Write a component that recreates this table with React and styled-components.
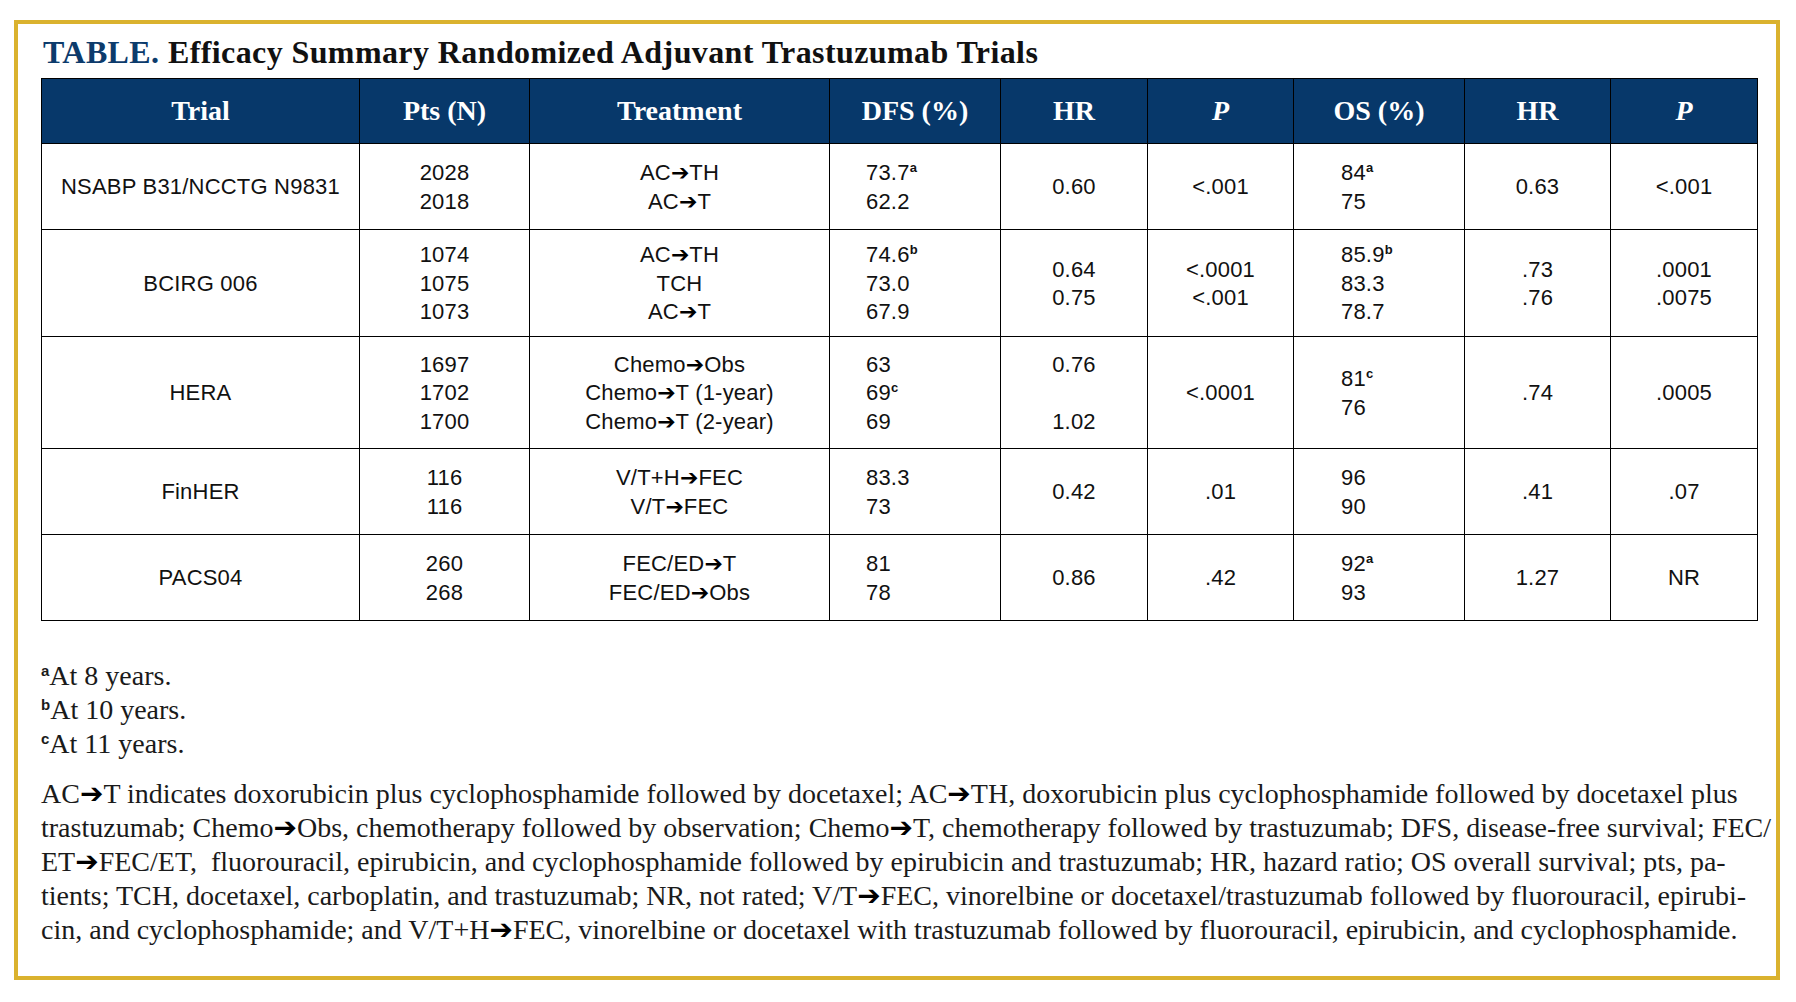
import React from 'react'
import styled, { createGlobalStyle } from 'styled-components'

const GlobalStyle = createGlobalStyle`
  html, body {
    margin: 0;
    padding: 0;
    background: #fff;
  }
  body {
    font-family: 'Liberation Serif', serif;
    color: #111;
  }
`

const Frame = styled.div`
  box-sizing: border-box;
  width: 1766px;
  height: 960px;
  margin: 20px 0 0 14px;
  border: 4px solid #dab22e;
  padding: 10px 19px 0 23px;
`

const Title = styled.h1`
  margin: 0 0 0 2px;
  height: 36px;
  font-family: 'Liberation Serif', serif;
  font-weight: 700;
  font-size: 32px;
  letter-spacing: 0.4px;
  line-height: 36px;
  color: #111;
  white-space: nowrap;
`

const Label = styled.span`
  color: #0c3b6c;
`

const Table = styled.table`
  margin-top: 8px;
  width: 1716px;
  table-layout: fixed;
  border-collapse: collapse;
`

const Th = styled.th`
  height: 64px;
  padding: 0;
  background: #07386a;
  color: #fff;
  border: 1px solid #000;
  font-family: 'Liberation Serif', serif;
  font-size: 28px;
  font-weight: 700;
  font-style: ${p => (p.$italic ? 'italic' : 'normal')};
  text-align: center;
  vertical-align: middle;
`

const Row = styled.tr`
  height: ${p => p.$h}px;
`

const Td = styled.td`
  border: 1px solid #000;
  padding: 2px 0 0 ${p => p.$pad || 0}px;
  text-align: ${p => (p.$pad ? 'left' : 'center')};
  vertical-align: middle;
  font-family: 'Liberation Sans', sans-serif;
  font-size: 22px;
  line-height: 28.5px;
  letter-spacing: 0.2px;
  color: #111;
`

const Line = styled.div`
  white-space: nowrap;
`

const Sup = styled.span`
  font-family: 'Liberation Sans', sans-serif;
  font-size: ${p => p.$size || 13}px;
  font-weight: 700;
  line-height: 0;
  vertical-align: ${p => p.$raise || 8}px;
  letter-spacing: 0;
`

const Arrow = styled.span`
  font-family: 'DejaVu Sans', sans-serif;
  font-size: 1em;
  font-weight: 700;
  line-height: 0;
  letter-spacing: 0;
  color: #000;
`

const Notes = styled.div`
  margin-top: 38px;
  font-family: 'Liberation Serif', serif;
  font-size: 28px;
  line-height: 34px;
  color: #1a1a1a;
`

const Legend = styled.div`
  margin-top: 16px;
`

const NoteLine = styled.div`
  height: 34px;
  white-space: pre;
`

// "->" becomes the heavy arrow, "^x" at the end a superscript
function Text({ value, supSize, supRaise }) {
  let main = value
  let sup = null
  const i = value.indexOf('^')
  if (i >= 0) {
    main = value.slice(0, i)
    sup = value.slice(i + 1)
  }
  const parts = main.split('->')
  return (
    <>
      {parts.map((p, k) => (
        <React.Fragment key={k}>
          {k > 0 && <Arrow>➔</Arrow>}
          {p}
        </React.Fragment>
      ))}
      {sup && (
        <Sup $size={supSize} $raise={supRaise}>
          {sup}
        </Sup>
      )}
    </>
  )
}

const columns = [
  { label: 'Trial', w: 318 },
  { label: 'Pts (N)', w: 170 },
  { label: 'Treatment', w: 300 },
  { label: 'DFS (%)', w: 171, pad: 36 },
  { label: 'HR', w: 147 },
  { label: 'P', w: 146, italic: true },
  { label: 'OS (%)', w: 171, pad: 47 },
  { label: 'HR', w: 146 },
  { label: 'P', w: 147, italic: true },
]

const rows = [
  {
    h: 86,
    cells: [
      ['NSABP B31/NCCTG N9831'],
      ['2028', '2018'],
      ['AC->TH', 'AC->T'],
      ['73.7^a', '62.2'],
      ['0.60'],
      ['<.001'],
      ['84^a', '75'],
      ['0.63'],
      ['<.001'],
    ],
  },
  {
    h: 107,
    cells: [
      ['BCIRG 006'],
      ['1074', '1075', '1073'],
      ['AC->TH', 'TCH', 'AC->T'],
      ['74.6^b', '73.0', '67.9'],
      ['0.64', '0.75'],
      ['<.0001', '<.001'],
      ['85.9^b', '83.3', '78.7'],
      ['.73', '.76'],
      ['.0001', '.0075'],
    ],
  },
  {
    h: 112,
    cells: [
      ['HERA'],
      ['1697', '1702', '1700'],
      ['Chemo->Obs', 'Chemo->T (1-year)', 'Chemo->T (2-year)'],
      ['63', '69^c', '69'],
      ['0.76', '\u00a0', '1.02'],
      ['<.0001'],
      ['81^c', '76'],
      ['.74'],
      ['.0005'],
    ],
  },
  {
    h: 86,
    cells: [
      ['FinHER'],
      ['116', '116'],
      ['V/T+H->FEC', 'V/T->FEC'],
      ['83.3', '73'],
      ['0.42'],
      ['.01'],
      ['96', '90'],
      ['.41'],
      ['.07'],
    ],
  },
  {
    h: 86,
    cells: [
      ['PACS04'],
      ['260', '268'],
      ['FEC/ED->T', 'FEC/ED->Obs'],
      ['81', '78'],
      ['0.86'],
      ['.42'],
      ['92^a', '93'],
      ['1.27'],
      ['NR'],
    ],
  },
]

const footnotes = [
  ['a', 'At 8 years.'],
  ['b', 'At 10 years.'],
  ['c', 'At 11 years.'],
]

const legend = [
  'AC->T indicates doxorubicin plus cyclophosphamide followed by docetaxel; AC->TH, doxorubicin plus cyclophosphamide followed by docetaxel plus',
  'trastuzumab; Chemo->Obs, chemotherapy followed by observation; Chemo->T, chemotherapy followed by trastuzumab; DFS, disease-free survival; FEC/',
  'ET->FEC/ET,  fluorouracil, epirubicin, and cyclophosphamide followed by epirubicin and trastuzumab; HR, hazard ratio; OS overall survival; pts, pa-',
  'tients; TCH, docetaxel, carboplatin, and trastuzumab; NR, not rated; V/T->FEC, vinorelbine or docetaxel/trastuzumab followed by fluorouracil, epirubi-',
  'cin, and cyclophosphamide; and V/T+H->FEC, vinorelbine or docetaxel with trastuzumab followed by fluorouracil, epirubicin, and cyclophosphamide.',
]

export default function App() {
  return (
    <>
      <GlobalStyle />
      <Frame>
        <Title>
          <Label>TABLE.</Label> Efficacy Summary Randomized Adjuvant Trastuzumab Trials
        </Title>
        <Table>
          <colgroup>
            {columns.map((c, i) => (
              <col key={i} style={{ width: c.w }} />
            ))}
          </colgroup>
          <thead>
            <tr>
              {columns.map((c, i) => (
                <Th key={i} $italic={c.italic}>
                  {c.label}
                </Th>
              ))}
            </tr>
          </thead>
          <tbody>
            {rows.map((r, ri) => (
              <Row key={ri} $h={r.h}>
                {r.cells.map((lines, ci) => (
                  <Td key={ci} $pad={columns[ci].pad}>
                    {lines.map((l, li) => (
                      <Line key={li}>
                        <Text value={l} />
                      </Line>
                    ))}
                  </Td>
                ))}
              </Row>
            ))}
          </tbody>
        </Table>
        <Notes>
          {footnotes.map(([mark, text]) => (
            <NoteLine key={mark}>
              <Sup $size={15} $raise={9}>
                {mark}
              </Sup>
              {text}
            </NoteLine>
          ))}
          <Legend>
            {legend.map((l, i) => (
              <NoteLine key={i}>
                <Text value={l} />
              </NoteLine>
            ))}
          </Legend>
        </Notes>
      </Frame>
    </>
  )
}
